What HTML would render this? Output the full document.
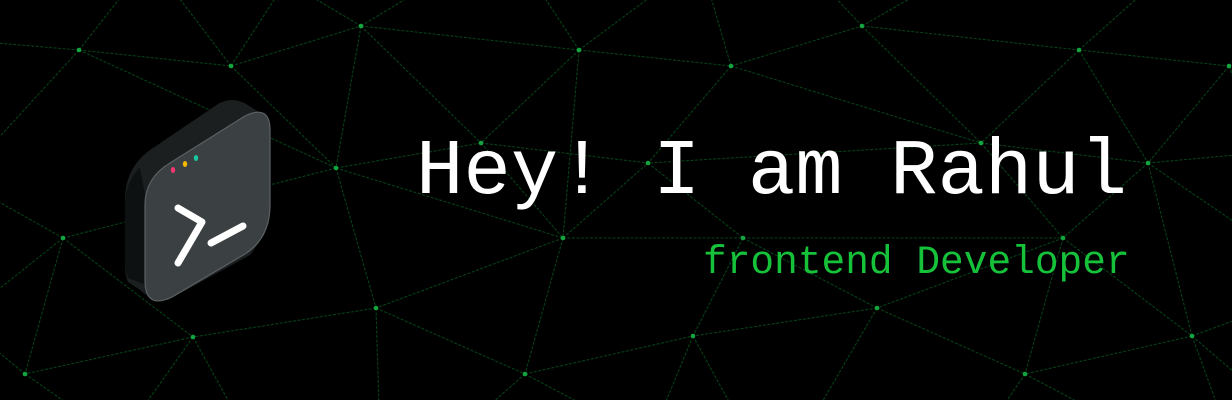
<!DOCTYPE html>
<html><head><meta charset="utf-8"><style>
html,body{margin:0;padding:0;background:#000;width:1232px;height:400px;overflow:hidden;}
body{position:relative;}
svg{position:absolute;left:0;top:0;display:block;overflow:hidden;}
.t{font-family:"Liberation Mono",monospace;white-space:pre;}
</style></head><body>
<svg width="1232" height="400" viewBox="0 0 1232 400">
<g stroke="#0a6a26" stroke-width="1.1" stroke-dasharray="3 1.5" opacity="0.6" fill="none">
<path d="
M79 50L231 66 M79 50L-40 40 M79 50L150 -40 M79 50L-40 180 M79 50L336 168
M231 66L361 26 M231 66L150 -40 M231 66L336 168 M231 66L300 -40
M361 26L579 50 M361 26L470 -40 M361 26L336 168 M361 26L481 143 M361 26L250 -40
M579 50L481 143 M579 50L731 66 M579 50L563 238 M579 50L520 -40 M579 50L700 -40
M481 143L336 168 M481 143L563 238 M481 143L648 163
M336 168L63 238 M336 168L563 238 M336 168L376 308
M63 238L193 337 M63 238L25 374 M63 238L-40 320 M63 238L-40 180
M563 238L376 308 M563 238L525 374 M563 238L743 238 M563 238L648 163
M376 308L193 337 M376 308L525 374 M376 308L380 440
M193 337L25 374 M193 337L120 440 M193 337L250 440 M25 374L120 440 M25 374L-40 320
M525 374L650 440 M525 374L693 336 M525 374L450 440
M731 66L862 26 M731 66L648 163 M731 66L981 143 M731 66L700 -40
M862 26L1079 50 M862 26L981 143 M862 26L960 -30 M862 26L800 -40
M1079 50L1229 66 M1079 50L1148 163 M1079 50L1180 -40 M1079 50L981 143
M1229 66L1148 163 M1229 66L1290 150 M1229 66L1290 -20
M981 143L1148 163 M981 143L648 163 M981 143L1063 238
M648 163L743 238 M1148 163L1063 238 M1148 163L1192 336 M1148 163L1290 150 M1148 163L1290 260
M743 238L1063 238 M743 238L693 336 M743 238L877 308
M1063 238L877 308 M1063 238L1192 336 M1063 238L1025 374
M877 308L693 336 M877 308L1025 374 M877 308L800 440
M693 336L650 440 M693 336L750 440
M1192 336L1025 374 M1192 336L1290 300 M1192 336L1290 420 M1192 336L1230 440
M1025 374L980 440 M1025 374L1150 440 M1229 66L1290 240
"/>
</g>
<g fill="#14a540">
<circle cx="79" cy="50" r="2.3"/><circle cx="231" cy="66" r="2.3"/><circle cx="361" cy="26" r="2.3"/>
<circle cx="579" cy="50" r="2.3"/><circle cx="481" cy="143" r="2.3"/><circle cx="336" cy="168" r="2.3"/>
<circle cx="63" cy="238" r="2.3"/><circle cx="563" cy="238" r="2.3"/><circle cx="376" cy="308" r="2.3"/>
<circle cx="193" cy="337" r="2.3"/><circle cx="25" cy="374" r="2.3"/><circle cx="525" cy="374" r="2.3"/>
<circle cx="731" cy="66" r="2.3"/><circle cx="862" cy="26" r="2.3"/><circle cx="1079" cy="50" r="2.3"/>
<circle cx="1229" cy="66" r="2.3"/><circle cx="981" cy="143" r="2.3"/><circle cx="648" cy="163" r="2.3"/>
<circle cx="1148" cy="163" r="2.3"/><circle cx="743" cy="238" r="2.3"/><circle cx="1063" cy="238" r="2.3"/>
<circle cx="877" cy="308" r="2.3"/><circle cx="693" cy="336" r="2.3"/><circle cx="1192" cy="336" r="2.3"/>
<circle cx="1025" cy="374" r="2.3"/>
</g>
<path d="M125 200 Q125 168 150 150 L218 104 Q232 96 246 104 L262 114 L270 200 Q270 230 250 255 L168 300 Q150 300 140 290 L128 282 Q125 275 125 265 Z" fill="#1b1f20"/>
<path d="M125 200 Q128 178 140 168 L146 200 L146 285 L128 278 Q125 270 125 262 Z" fill="#0e1111"/>
<path d="M145 205 Q145 178 170 163 L245 116 Q270 104 270 130 L270 205 Q270 238 245 254 L172 297 Q145 310 145 280 Z" fill="#3b4042" stroke="#5c6163" stroke-width="1.2"/>
<ellipse cx="173" cy="170" rx="2.2" ry="3" fill="#f0356f"/>
<ellipse cx="185" cy="164" rx="2.2" ry="3" fill="#f5b800"/>
<ellipse cx="196" cy="158" rx="2.2" ry="3" fill="#16c7a0"/>
<path d="M178 208 L202 222 L178 263" stroke="#fff" stroke-width="7" fill="none" stroke-linecap="round" stroke-linejoin="round"/>
<path d="M211 243 L243 226" stroke="#fff" stroke-width="7" fill="none" stroke-linecap="round"/>
<text class="t" x="416" y="193" font-size="79" fill="#fff">Hey! I am Rahul</text>
<text class="t" x="703" y="273" font-size="39.5" fill="#16c23a">frontend Developer</text>
</svg>
</body></html>
